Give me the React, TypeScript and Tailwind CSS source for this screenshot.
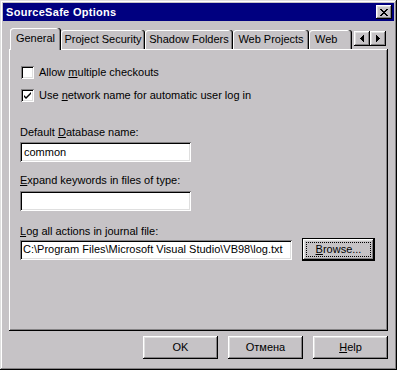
import React from "react";

const raised =
  "shadow-[inset_-1px_-1px_#000,inset_1px_1px_#fff,inset_-2px_-2px_#848284,inset_2px_2px_#dfdfdf]";
const frame =
  "shadow-[inset_-1px_-1px_#000,inset_1px_1px_#dfdfdf,inset_-2px_-2px_#848284,inset_2px_2px_#fff]";
const sunken =
  "shadow-[inset_1px_1px_#848284,inset_-1px_-1px_#fff,inset_2px_2px_#000,inset_-2px_-2px_#dfdfdf]";
const panel = "shadow-[inset_-1px_-1px_#000,inset_1px_1px_#fff,inset_-2px_-2px_#848284]";
const tabEdge = "shadow-[inset_-1px_0_#000,inset_-2px_0_#848284,inset_1px_1px_#fff]";

const tabs = [
  { label: "Project Security", w: "w-[84px] justify-center" },
  { label: "Shadow Folders", w: "w-[88px] justify-center" },
  { label: "Web Projects", w: "w-[76px] justify-center" },
  { label: "Web", w: "w-[43px] justify-start pl-[6px]" },
];

function Checkbox({ checked }: { checked?: boolean }) {
  return (
    <div className={`w-[13px] h-[13px] bg-white ml-px shrink-0 ${sunken}`}>
      {checked && (
        <svg width="13" height="13" viewBox="0 0 13 13">
          <path d="M3 6v2l2 2l5-5V3L5 8z" fill="#000" />
        </svg>
      )}
    </div>
  );
}

function Button({ children, className = "" }: { children: React.ReactNode; className?: string }) {
  return (
    <div className={`w-[75px] h-[23px] flex items-center justify-center bg-[#c6c3c6] ${raised} ${className}`}>
      {children}
    </div>
  );
}

export default function App() {
  return (
    <div
      className={`w-[397px] h-[370px] bg-[#c6c3c6] p-[3px] flex flex-col text-[11px] text-black ${frame}`}
      style={{ fontFamily: '"Liberation Sans", Arial, sans-serif' }}
    >
      {/* Title bar */}
      <div className="h-[18px] bg-[#000080] flex items-center justify-between pl-[3px] pr-[2px]">
        <span className="text-white font-bold text-[11px] tracking-[0.3px]">SourceSafe Options</span>
        <div className={`w-[16px] h-[14px] flex items-center justify-center ${raised} bg-[#c6c3c6]`}>
          <svg width="8" height="7" viewBox="0 0 8 7" shapeRendering="crispEdges">
            <path d="M0 0h2v1h-2zM6 0h2v1h-2zM1 1h2v1h-2zM5 1h2v1h-2zM2 2h4v1h-4zM3 3h2v1h-2zM2 4h4v1h-4zM1 5h2v1h-2zM5 5h2v1h-2zM0 6h2v1h-2zM6 6h2v1h-2z" fill="#000" />
          </svg>
        </div>
      </div>

      <div className="px-[6px] pt-[7px] flex flex-col">
        {/* Tabs */}
        <div className="flex">
          <div className="flex-1 flex items-end h-[22px] ml-px overflow-hidden">
            <div className={`relative z-10 w-[52px] h-[22px] bg-[#c6c3c6] rounded-t-[3px] flex justify-center pt-[4px] leading-[13px] ${tabEdge}`}>
              General
            </div>
            {tabs.map((t) => (
              <div
                key={t.label}
                className={`${t.w} h-[19px] mb-px shrink-0 rounded-t-[3px] flex items-center leading-[13px] ${tabEdge}`}
              >
                {t.label}
              </div>
            ))}
          </div>
          <div className="flex ml-[2px] mr-[2px] mt-[3px] self-start">
            <div className={`w-[16px] h-[15px] flex items-center justify-center ${raised}`}>
              <svg width="4" height="7" viewBox="0 0 4 7" shapeRendering="crispEdges">
                <path d="M3 0h1v7h-1zM2 1h1v5h-1zM1 2h1v3h-1zM0 3h1v1h-1z" fill="#000" />
              </svg>
            </div>
            <div className={`w-[16px] h-[15px] flex items-center justify-center ${raised}`}>
              <svg width="4" height="7" viewBox="0 0 4 7" shapeRendering="crispEdges">
                <path d="M0 0h1v7h-1zM1 1h1v5h-1zM2 2h1v3h-1zM3 3h1v1h-1z" fill="#000" />
              </svg>
            </div>
          </div>
        </div>

        {/* Panel */}
        <div className={`-mt-px h-[282px] pl-[11px] pt-[17px] flex flex-col ${panel}`}>
          <div className="flex items-center h-[13px]">
            <Checkbox />
            <span className="ml-[5px] leading-[13px]">
              Allow <u>m</u>ultiple checkouts
            </span>
          </div>
          <div className="flex items-center h-[13px] mt-[10px]">
            <Checkbox checked />
            <span className="ml-[5px] leading-[13px]">
              Use <u>n</u>etwork name for automatic user log in
            </span>
          </div>

          <div className="mt-[24px] leading-[13px]">
            Default <u>D</u>atabase name:
          </div>
          <div className={`mt-[3px] w-[171px] h-[20px] bg-white pl-[4px] flex items-center ${sunken}`}>common</div>

          <div className="mt-[12px] leading-[13px]">
            <u>E</u>xpand keywords in files of type:
          </div>
          <div className={`mt-[4px] w-[171px] h-[20px] bg-white ${sunken}`} />

          <div className="mt-[14px] leading-[13px]">
            <u>L</u>og all actions in journal file:
          </div>
          <div className="flex items-center h-[23px]">
            <div className={`w-[272px] h-[20px] bg-white pl-[3px] flex items-center ${sunken}`}>
              C:\Program Files\Microsoft Visual Studio\VB98\log.txt
            </div>
            <div className="ml-[10px] w-[73px] h-[23px] border border-black">
              <div className={`w-full h-full p-[3px] ${raised}`}>
                <div className="w-full h-full border border-dotted border-black flex items-center justify-center">
                  <span>
                    <u>B</u>rowse...
                  </span>
                </div>
              </div>
            </div>
          </div>
        </div>

        {/* Bottom buttons */}
        <div className="mt-[5px] flex justify-end gap-[10px]">
          <Button>OK</Button>
          <Button>Отмена</Button>
          <Button>
            <span>
              <u>H</u>elp
            </span>
          </Button>
        </div>
      </div>
    </div>
  );
}
